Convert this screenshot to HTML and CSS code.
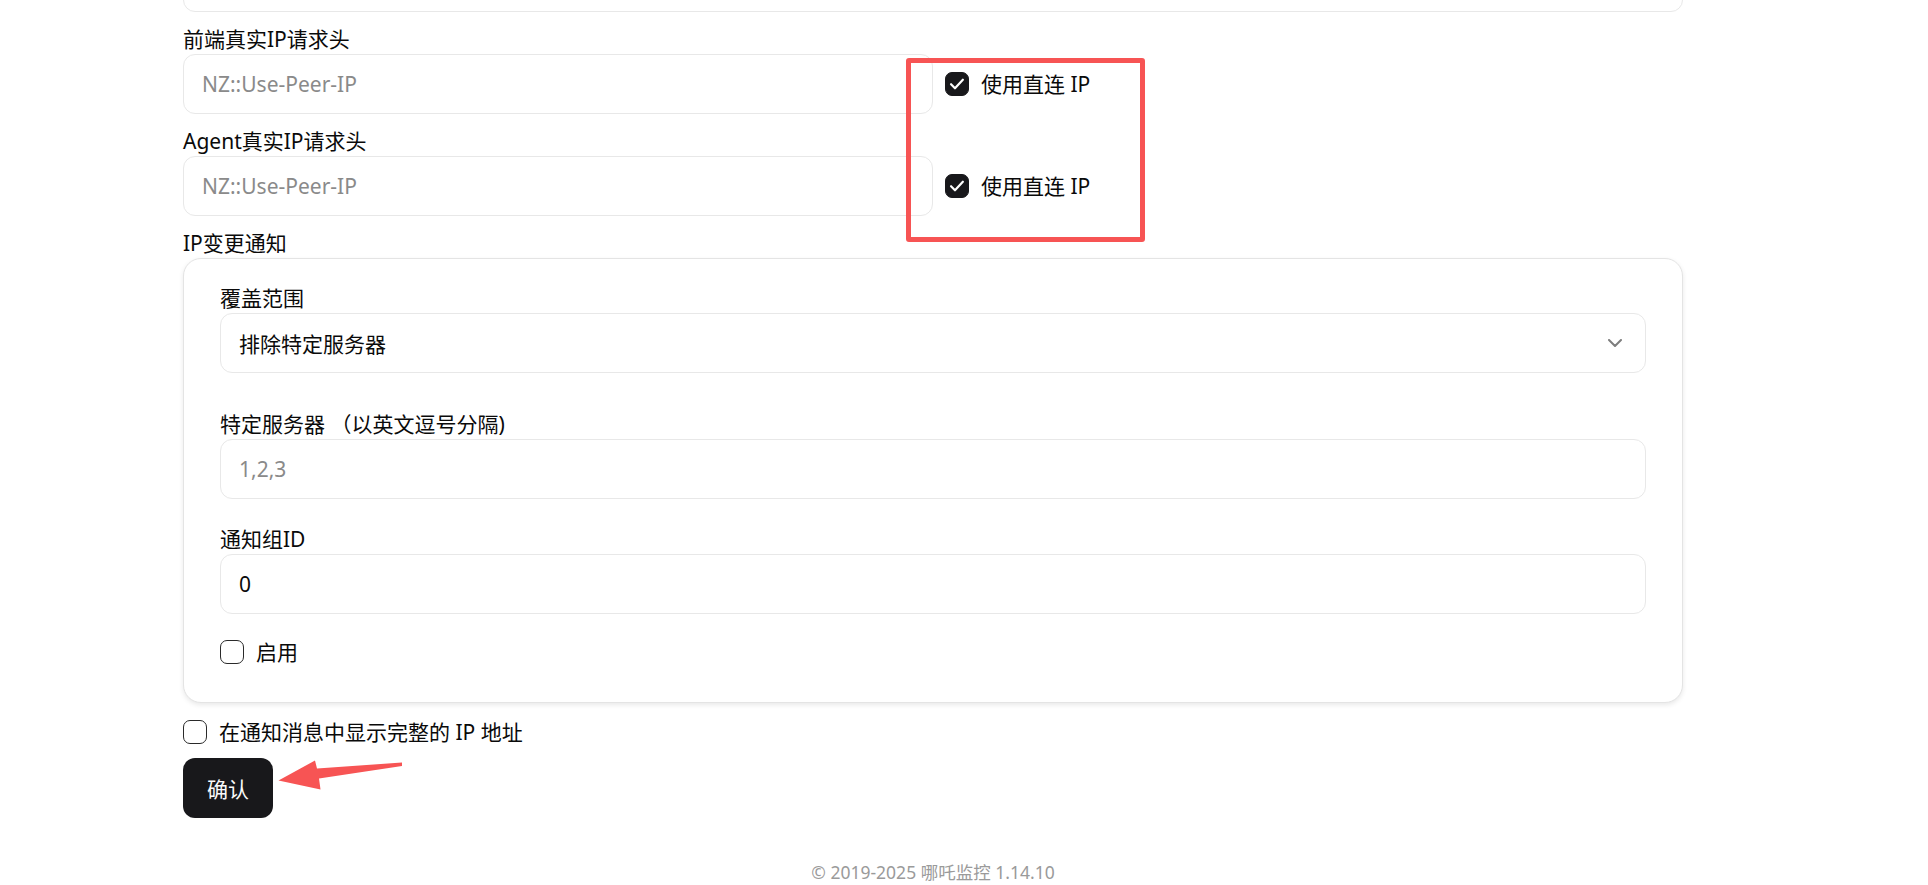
FILE: index.html
```html
<!DOCTYPE html>
<html lang="zh-CN">
<head>
<meta charset="utf-8">
<title>设置</title>
<link rel="stylesheet" href="styles.css">
</head>
<body>
<div class="page">
  <div class="input full"></div>

  <div class="field">
    <div class="label">前端真实IP请求头</div>
    <div class="row">
      <div class="input half placeholder">NZ::Use-Peer-IP</div>
      <div class="check">
        <span class="box checked"><svg viewBox="0 0 24 24" width="24" height="24"><path d="M5.5 12.3l4.3 4.3 8.6-9.2" fill="none" stroke="#fff" stroke-width="2.4" stroke-linecap="round" stroke-linejoin="round"/></svg></span>
        <span class="check-text">使用直连 IP</span>
      </div>
    </div>
  </div>

  <div class="field">
    <div class="label">Agent真实IP请求头</div>
    <div class="row">
      <div class="input half placeholder">NZ::Use-Peer-IP</div>
      <div class="check">
        <span class="box checked"><svg viewBox="0 0 24 24" width="24" height="24"><path d="M5.5 12.3l4.3 4.3 8.6-9.2" fill="none" stroke="#fff" stroke-width="2.4" stroke-linecap="round" stroke-linejoin="round"/></svg></span>
        <span class="check-text">使用直连 IP</span>
      </div>
    </div>
  </div>

  <div class="field">
    <div class="label">IP变更通知</div>
    <div class="card">
      <div class="label">覆盖范围</div>
      <div class="input select">
        <span>排除特定服务器</span>
        <svg class="chev" viewBox="0 0 24 24" width="24" height="24"><path d="M6 9l6 6 6-6" fill="none" stroke="#000" stroke-width="2" stroke-linecap="round" stroke-linejoin="round"/></svg>
      </div>
      <div class="label gap-lg">特定服务器 （以英文逗号分隔)</div>
      <div class="input placeholder">1,2,3</div>
      <div class="label gap-md">通知组ID</div>
      <div class="input">0</div>
      <div class="check inner-check">
        <span class="box"></span>
        <span class="check-text">启用</span>
      </div>
    </div>
  </div>

  <div class="check outer-check">
    <span class="box"></span>
    <span class="check-text">在通知消息中显示完整的 IP 地址</span>
  </div>

  <button class="btn">确认</button>

  <footer class="footer">© 2019-2025 哪吒监控 1.14.10</footer>

  <div class="highlight"></div>
  <svg class="arrow" viewBox="273 756 135 40" width="135" height="40">
    <polygon points="278.5,780.5 315,760.5 317,768.5 402,762.5 402,766 319,778.5 320.5,789.5" fill="#f75454"/>
  </svg>
</div>
</body>
</html>
```

FILE: styles.css
```css
html, body {
  margin: 0;
  padding: 0;
  background: #ffffff;
}

body {
  font-family: "Noto Sans", "Noto Sans CJK SC", sans-serif;
  font-size: 21px;
  color: #0a0a0a;
  overflow: hidden;
}

.page {
  position: relative;
  width: 1500px;
  margin-left: 183px;
  margin-top: -48px;
}

.field {
  margin-top: 12px;
}

.label {
  height: 30px;
  line-height: 30px;
  font-size: 21px;
  white-space: nowrap;
}

.label.gap-lg {
  margin-top: 36px;
}

.label.gap-md {
  margin-top: 25px;
}

.input {
  box-sizing: border-box;
  height: 60px;
  border: 1px solid #e8e8e8;
  border-radius: 12px;
  padding: 0 18px;
  display: flex;
  align-items: center;
  font-size: 21px;
  background: #fff;
}

.input.full {
  width: 100%;
}

.input.half {
  width: 750px;
  flex: none;
}

.placeholder {
  color: #8a8a8a;
}

.row {
  display: flex;
  align-items: center;
  gap: 12px;
}

.check {
  display: flex;
  align-items: center;
  gap: 12px;
  height: 30px;
}

.check-text {
  font-size: 21px;
  line-height: 30px;
  white-space: nowrap;
}

.box {
  box-sizing: border-box;
  width: 24px;
  height: 24px;
  border: 1.5px solid #2a2a2a;
  border-radius: 7px;
  display: flex;
  align-items: center;
  justify-content: center;
  flex: none;
  background: #fff;
}

.box.checked {
  background: #18181b;
  border-color: #18181b;
}

.box svg {
  width: 22px;
  height: 22px;
}

.card {
  box-sizing: border-box;
  border: 1px solid #e4e4e4;
  border-radius: 18px;
  padding: 24px 36px 35px;
  box-shadow: 0 2px 5px rgba(0, 0, 0, 0.09);
  background: #fff;
}

.select {
  justify-content: space-between;
}

.chev {
  opacity: 0.5;
  width: 24px;
  height: 24px;
}

.inner-check {
  margin-top: 23px;
}

.outer-check {
  margin-top: 14px;
}

.btn {
  display: block;
  margin-top: 11px;
  height: 60px;
  width: 90px;
  border: none;
  border-radius: 12px;
  background: #18181b;
  color: #fafafa;
  font-family: "Noto Sans", "Noto Sans CJK SC", sans-serif;
  font-size: 21px;
  font-weight: 400;
  padding: 0;
}

.footer {
  margin-top: 41px;
  text-align: center;
  font-size: 17.5px;
  line-height: 27px;
  color: #9a9a9a;
}

.highlight {
  position: absolute;
  left: 723px;
  top: 106px;
  width: 239px;
  height: 184px;
  box-sizing: border-box;
  border: 5px solid #f75454;
  border-radius: 3px;
}

.arrow {
  position: absolute;
  left: 90px;
  top: 804px;
}
```
